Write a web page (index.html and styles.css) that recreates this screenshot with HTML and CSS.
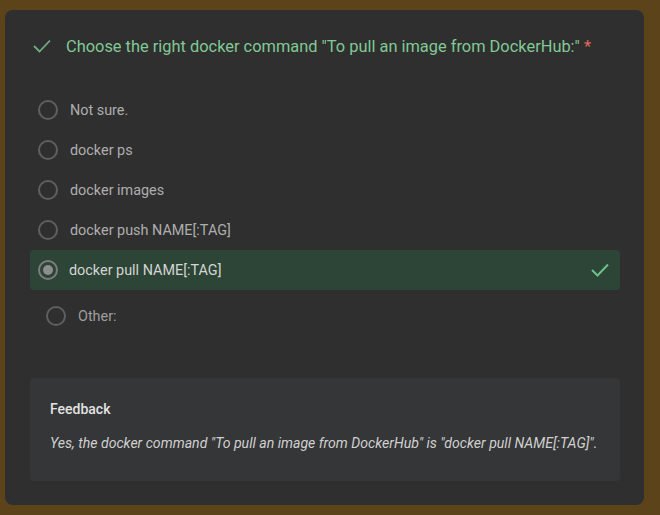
FILE: index.html
```html
<!DOCTYPE html>
<html>
<head>
<meta charset="utf-8">
<link rel="stylesheet" href="styles.css">
</head>
<body>
<div class="card">
  <div class="title">
    <svg class="title-check" width="18" height="14" viewBox="0 0 18 14"><path d="M1 7 L6.5 12.5 L17 1.5" fill="none" stroke="#6fae83" stroke-width="1.8"/></svg>
    <span class="title-text">Choose the right docker command "To pull an image from DockerHub:" <span class="req">*</span></span>
  </div>
  <div class="options">
    <div class="opt"><span class="radio"></span><span class="label">Not sure.</span></div>
    <div class="opt"><span class="radio"></span><span class="label">docker ps</span></div>
    <div class="opt"><span class="radio"></span><span class="label">docker images</span></div>
    <div class="opt"><span class="radio"></span><span class="label">docker push NAME[:TAG]</span></div>
    <div class="opt selected"><span class="radio on"></span><span class="label">docker pull NAME[:TAG]</span>
      <svg class="opt-check" width="18" height="14" viewBox="0 0 18 14"><path d="M1 7 L6.5 12.5 L17 1.5" fill="none" stroke="#6cc08a" stroke-width="2"/></svg>
    </div>
    <div class="opt other"><span class="radio"></span><span class="label">Other:</span></div>
  </div>
  <div class="feedback">
    <div class="fb-title">Feedback</div>
    <div class="fb-text">Yes, the docker command "To pull an image from DockerHub" is "docker pull NAME[:TAG]".</div>
  </div>
</div>
</body>
</html>
```
FILE: styles.css
```css
html, body {
  margin: 0;
  padding: 0;
}
body {
  background: #5d431a;
  font-family: Roboto, "Liberation Sans", sans-serif;
  width: 660px;
  height: 515px;
  overflow: hidden;
}
.card {
  margin: 10px 16px 0 5px;
  height: 495px;
  box-sizing: border-box;
  background: #2f2f2f;
  border-radius: 8px;
  padding: 24px 24px 24px 25px;
  display: flex;
  flex-direction: column;
}
.title {
  display: flex;
  align-items: center;
  height: 24px;
  padding-left: 3px;
}
.title-check {
  flex: none;
}
.title-text {
  margin-left: 15px;
  color: #81c995;
  font-size: 16.4px;
}
.req {
  color: #e06a5f;
}
.options {
  margin-top: 32px;
  display: flex;
  flex-direction: column;
}
.opt {
  height: 40px;
  display: flex;
  align-items: center;
  padding-left: 8px;
  border-radius: 4px;
}
.radio {
  width: 20px;
  height: 20px;
  box-sizing: border-box;
  border: 2px solid #5f5f5f;
  border-radius: 50%;
  flex: none;
  display: flex;
  align-items: center;
  justify-content: center;
}
.radio.on {
  border-color: #7d7d7d;
}
.radio.on::after {
  content: "";
  width: 10px;
  height: 10px;
  border-radius: 50%;
  background: #8e8e8e;
}
.label {
  margin-left: 12px;
  color: #aeaeae;
  font-size: 14.4px;
}
.selected {
  background: #2c4536;
}
.selected .label {
  margin-left: 11px;
  color: #d4d4d4;
}
.opt-check {
  margin-left: auto;
  margin-right: 11px;
}
.other {
  margin-top: 6px;
  padding-left: 16px;
}
.other .label {
  color: #9e9e9e;
}
.feedback {
  margin-top: 42px;
  background: #353637;
  border-radius: 4px;
  padding: 22px 20px 29px 20px;
}
.fb-title {
  color: #e2e2e2;
  font-size: 14px;
  font-weight: 500;
  line-height: 18px;
}
.fb-text {
  margin-top: 16px;
  color: #d0d0d0;
  font-size: 14.1px;
  font-style: italic;
  line-height: 18px;
}
```
